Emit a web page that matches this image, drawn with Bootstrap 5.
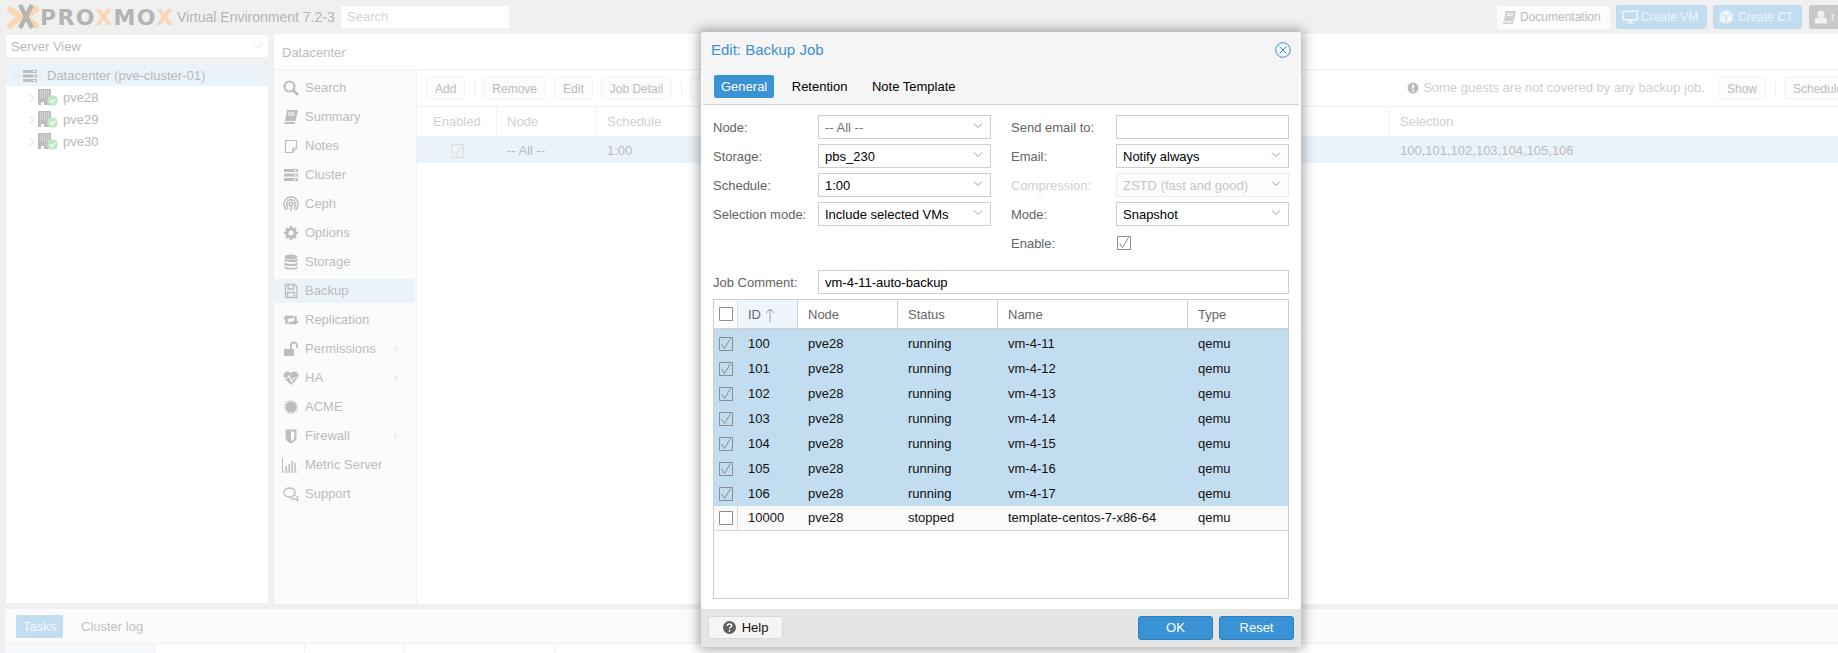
<!DOCTYPE html>
<html lang="en"><head><meta charset="utf-8"><title>Proxmox Virtual Environment</title>
<link href="https://cdn.jsdelivr.net/npm/bootstrap@5.3.0/dist/css/bootstrap.min.css" rel="stylesheet">
<style>
html,body{height:653px;overflow:hidden}
body{position:relative;background:#f0f0f0;font:13px/16px "Liberation Sans",Arial,sans-serif;color:#b7b7b7}
svg{display:block;flex:none}
.ico{fill:#bdbdbd}
.pm-top{height:34px;padding-left:7px}
.pm-brand{font:700 22px/25px "DejaVu Sans",sans-serif;letter-spacing:1.4px;color:#b4b4b4;width:138px;white-space:nowrap;padding-left:1px}
.pm-brand b{color:#fbd6b1;font-weight:700}
.pm-ver{font-size:14px;width:164px;white-space:nowrap;color:#b5b5b5}
.pm-search{width:168px;height:22px;background:#fff;color:#d5d5d5;padding:3px 6px;margin-top:-1px}
.pm-tbtn{height:23px;border-radius:3px;padding:0 5px;color:#bbb;background:#fcfcfc;font-size:12px;white-space:nowrap}
.pm-tbtn .ico{fill:#cfcfcf}
.pm-tbtn.blue{background:#c2dcf0;color:#eef6fb;border:1px solid #bdd9ee;height:24px;font-size:12px}
.pm-user{width:29px;height:24px;background:#c9c9c9;border-radius:3px 0 0 3px;color:#eee;padding-left:6px}
.pm-mid{height:570px;padding-left:6px;gap:6px}
.pm-left{width:262px;padding-top:1px}
.pm-view{height:22px;background:#fff;color:#bababa;padding:1px 5px 0}
.pm-tree{margin-top:7px;height:539px;background:#fff}
.pm-node{height:22px;color:#b9b9b9;padding:1px 0 0 6px}
.pm-node.on{background:#ebf3fa}
.pm-main{flex:1;background:#fff;min-width:0}
.pm-title{height:36px;border-bottom:1px solid #f0f0f0;padding:2px 8px 0;color:#bdbdbd}
.pm-side{width:143px;background:#fbfbfb;border-right:1px solid #f0f0f0;padding-top:3px}
.pm-item{height:29px;padding-left:9px;color:#bcbcbc;position:relative}
.pm-item.on::before{content:"";position:absolute;left:0;right:1px;top:3px;height:24px;background:#ebf3fa}
.pm-item>*{position:relative}
.pm-item svg{width:16px;height:16px;margin-right:6px}
.pm-caret{margin-left:auto;margin-right:17px;border-left:5px solid #efefef;border-top:5px solid transparent;border-bottom:5px solid transparent}
.pm-bar{height:37px;border-bottom:1px solid #f0f0f0;padding-left:9px}
.pm-btn{height:24px;background:#fcfcfc;border:1px solid #f3f3f3;border-radius:3px;padding:1px 8px 0;color:#bbb;font-size:12px;line-height:22px;white-space:nowrap}
.pm-sep{width:1px;height:15px;background:#eee;margin:0 8px 0 9px}
.pm-head{height:30px;color:#d0d0d0;border-bottom:1px solid #f0f0f0}
.pm-hc{border-right:1px solid #f2f2f2;padding-left:8px;padding-top:1px;height:100%;display:flex;align-items:center}
.pm-row{height:26px;background:#ebf3fa;color:#bcbcbc;padding-top:1px}
.pm-bottom{margin:5px 0 0 5px;background:#fbfbfb;height:44px}
.pm-tabs{height:35px;border-bottom:1px solid #f0f0f0;padding-left:11px}
.pm-tab{height:23px;padding:1px 7px 0;border-radius:2px;background:#c2dcf0;color:#f2f8fc;line-height:22px;width:47px}
.pm-clog{color:#c2c2c2;margin-left:18px;padding-top:1px;white-space:nowrap}
.pm-cols{height:9px;background:#fff}
.pm-cols div{border-right:1px solid #f0f0f0;height:100%}
/* modal */
.pm-dlg{position:absolute;left:701px;top:32px;width:600px;height:615px;background:#fff;border-radius:3px;box-shadow:0 0 12px 3px rgba(0,0,0,.32);overflow:hidden;color:#646464;display:flex;flex-direction:column}
.pm-dhead{height:43px;background:#f5f5f5;padding:0 10px 7px 10px;flex:none}
.pm-dtitle{font-size:15px;color:#3892d4}
.pm-dtabs{height:30px;background:#f5f5f5;margin:0 2px;padding-left:11px;border-bottom:1px solid #cfcfcf;flex:none;align-items:flex-start}
.pm-dtab{height:23px;line-height:23px;color:#000;padding:0 7px;border-radius:2px;background:transparent;border:0;font-size:13px}
.pm-dtab.active{background:#3892d4;color:#fff}
.pm-gap{margin-left:10.500px}
.pm-form{padding:10px 12px 0;flex:1;min-height:0}
.pm-cols2{display:grid;grid-template-columns:278px 278px;column-gap:20px;height:155px}
.pm-f{height:24px;margin-bottom:5px;display:flex;align-items:center}
.pm-f label{width:105px;flex:none;padding-top:1px}
.pm-f.dis{color:#d0d0d0}
.form-control.pm-in,.form-select.pm-in{width:173px;height:24px;min-height:24px;border:1px solid #cfcfcf;border-radius:0;padding:1px 5px 0 6px;font-size:13px;line-height:21px;color:#000;box-shadow:none;background-color:#fff}
.form-select.pm-in{background-image:url("data:image/svg+xml,%3Csvg xmlns='http://www.w3.org/2000/svg' width='10' height='6'%3E%3Cpath d='M1 .5l4 4 4-4' fill='none' stroke='%23999'/%3E%3C/svg%3E");background-position:right 7px top 7px;background-size:10px 6px}
.form-select.pm-in:disabled,.form-control.pm-in:disabled{color:#c6c6c6;border-color:#ececec;background-color:#fcfcfc}
.form-select.pm-in.dim{color:#747474}
.form-control.pm-long{width:471px}
.pm-chk{width:14px;height:14px;display:block}
.pm-grid{margin-top:5px;height:300px;width:576px;border:1px solid #cfcfcf;overflow:hidden}
.table.pm-tb{table-layout:fixed;width:575px;margin:0;color:#000;font-size:13px;border-collapse:separate;border-spacing:0}
.pm-tb th,.pm-tb td{padding:0 0 0 10px;border:0;vertical-align:middle;font-weight:400;background:transparent;box-shadow:none;white-space:nowrap;overflow:hidden}
.pm-tb th{height:29px;padding-top:1px;color:#666;border-right:1px solid #cfcfcf;border-bottom:1px solid #cfcfcf}
.pm-tb th.sorted{background:#eef5fc}
.pm-tb td{height:25px;color:#111}
.pm-tb th:first-child,.pm-tb td:first-child{padding:0 0 0 5px;border-right:1px solid #dcdcdc}
.pm-tb tr.sel td{background:#c2dcf0}
.pm-tb tr.sel td:first-child{border-right-color:#cfdde8}
.pm-tb tr.first td{height:27px;padding-top:2px}
.pm-tb tr.rest td{background:#fafafa;border-bottom:1px solid #d6d6d6;height:25px}
.pm-foot{height:38px;background:#e5e5e5;padding:0 7px;flex:none}
.pm-help{height:23px;width:75px;background:#f5f5f5;border:1px solid #d8d8d8;border-radius:3px;color:#111;font-size:13px;padding:0;line-height:21px;margin-top:-1px}
.pm-help svg{margin-right:6px}
.btn.pm-pri{height:24px;width:75px;background:#3892d4;border:1px solid #2a80c0;color:#fff;font-size:13px;border-radius:3px;padding:0;line-height:22px}
</style></head>
<body>
<svg width="0" height="0" class="position-absolute"><defs>
<symbol id="i-book" viewBox="0 0 16 16"><path d="M4 1h11l-2.500 11H2z M1.500 13h10.500l-.3 2H1z"/><path d="M5 4h7M4.600 6h7" stroke="#fbfbfb" fill="none"/></symbol>
<symbol id="i-srv" viewBox="0 0 16 16"><path d="M1 2h14v3H1zM1 6.500h14v3H1zM1 11h14v3H1z"/><path d="M11 3.500h2.500M11 8h2.500M11 12.500h2.500" stroke="#fff" fill="none"/></symbol>
<symbol id="i-node" viewBox="0 0 20 17"><path d="M0 0h13v16H0z" fill="#bdbdbd"/><path d="M2 2h9M2 4h9M2 6h9M2 8h9" stroke="#e8e8e8" stroke-dasharray="1 1"/><path d="M3 13h3v3H3z" fill="#fff"/><circle cx="14.500" cy="11.500" r="5.300" fill="#bfe8c5"/><path d="M12 11.500l2 2 3-3.500" fill="none" stroke="#fff" stroke-width="1.300"/></symbol>
<symbol id="i-on" viewBox="0 0 14 14"><path d="M.5.500h13v13H.5z" fill="none" stroke="#8c8c8c"/><path d="M2.500 7l3 4.500 6-10" fill="none" stroke="#8c8c8c"/></symbol>
<symbol id="i-off" viewBox="0 0 14 14"><path d="M.5.500h13v13H.5z" fill="#fff" stroke="#8c8c8c"/></symbol>
</defs></svg>

<div class="pm-top d-flex align-items-center">
  <svg width="32" height="26" viewBox="7 4 32 26"><path d="M8 8l13 9L8 27M38 8L25 17l13 10" fill="none" stroke="#fbd6b1" stroke-width="6"/><path d="M20 5l12 23M32 5L20 28" stroke="#b4b4b4" stroke-width="4.500" fill="none"/></svg>
  <div class="pm-brand">PRO<b>X</b>MO<b>X</b></div>
  <div class="pm-ver">Virtual Environment 7.2-3</div>
  <div class="pm-search">Search</div>
  <div class="ms-auto d-flex align-items-center">
    <div class="pm-tbtn d-flex align-items-center" style="width:113px"><svg class="ico" style="margin-right:3px" width="15" height="15"><use href="#i-book"/></svg>Documentation</div>
    <div class="pm-tbtn blue d-flex align-items-center" style="width:91px;margin-left:6px"><svg width="16" height="16" style="margin-right:3px" viewBox="0 0 16 16"><path d="M0 1.500h16v10H9.500v2H12v1H4v-1h2.500v-2H0z" fill="#eef6fb"/><path d="M1.500 3h13v7h-13z" fill="#c2dcf0"/></svg>Create VM</div>
    <div class="pm-tbtn blue d-flex align-items-center" style="width:89px;margin-left:6px"><svg width="14" height="14" style="margin-right:5px" viewBox="0 0 14 14"><path d="M7 0l6.500 3v8L7 14 .5 11V3z" fill="#eef6fb"/><path d="M7 6.500l5.500-3M7 6.500L1.500 3.500M7 6.500V14" stroke="#c2dcf0" fill="none"/></svg>Create CT</div>
    <div class="pm-user d-flex align-items-center" style="margin-left:7px"><svg width="12" height="14" viewBox="0 0 12 14"><circle cx="6" cy="4" r="3.500" fill="#f2f2f2"/><path d="M0 13.500V10q0-2.500 3-2.500h6q3 0 3 2.500v3.500z" fill="#f2f2f2"/></svg><span class="ms-1">r</span></div>
  </div>
</div>

<div class="pm-mid d-flex">
  <div class="pm-left flex-none">
    <div class="pm-view d-flex align-items-center justify-content-between">Server View<svg width="10" height="6"><path d="M1 .5l4 4 4-4" fill="none" stroke="#dedede"/></svg></div>
    <div class="pm-tree">
      <div class="pm-node on d-flex align-items-center"><svg width="10" height="6"><path d="M1 .5l4 4 4-4" fill="none" stroke="#d8d8d8"/></svg><svg class="ico" width="16" height="16"><use href="#i-srv"/></svg><span style="margin-left:9px">Datacenter (pve-cluster-01)</span></div>
      <div class="pm-node d-flex align-items-center ps-4"><svg width="6" height="10" style="margin:0 3px 0 -1px"><path d="M.5 1l4 4-4 4" fill="none" stroke="#d8d8d8"/></svg><svg width="20" height="17"><use href="#i-node"/></svg><span style="margin-left:5px">pve28</span></div>
      <div class="pm-node d-flex align-items-center ps-4"><svg width="6" height="10" style="margin:0 3px 0 -1px"><path d="M.5 1l4 4-4 4" fill="none" stroke="#d8d8d8"/></svg><svg width="20" height="17"><use href="#i-node"/></svg><span style="margin-left:5px">pve29</span></div>
      <div class="pm-node d-flex align-items-center ps-4"><svg width="6" height="10" style="margin:0 3px 0 -1px"><path d="M.5 1l4 4-4 4" fill="none" stroke="#d8d8d8"/></svg><svg width="20" height="17"><use href="#i-node"/></svg><span style="margin-left:5px">pve30</span></div>
    </div>
  </div>
  <div class="pm-main d-flex flex-column">
    <div class="pm-title d-flex align-items-center">Datacenter</div>
    <div class="d-flex flex-fill" style="min-height:0">
      <div class="pm-side">
        <div class="pm-item d-flex align-items-center"><svg class="ico" viewBox="0 0 16 16"><circle cx="6.500" cy="6.500" r="5" fill="none" stroke="#bdbdbd" stroke-width="2.200"/><path d="M10 10l5 5" stroke="#bdbdbd" stroke-width="2.600"/></svg><span>Search</span></div>
        <div class="pm-item d-flex align-items-center"><svg class="ico"><use href="#i-book"/></svg><span>Summary</span></div>
        <div class="pm-item d-flex align-items-center"><svg viewBox="0 0 16 16"><path d="M2.500 2.500h11v8l-4 4h-7z" fill="none" stroke="#bdbdbd" stroke-width="1.200"/><path d="M9.500 14v-4h4" fill="none" stroke="#bdbdbd"/></svg><span>Notes</span></div>
        <div class="pm-item d-flex align-items-center"><svg class="ico"><use href="#i-srv"/></svg><span>Cluster</span></div>
        <div class="pm-item d-flex align-items-center"><svg viewBox="0 0 16 16" fill="none" stroke="#bdbdbd" stroke-width="1.500"><path d="M3.500 14Q1 11.500 1 8a7 7 0 0 1 14 0q0 3.500-2.500 6"/><path d="M5.300 13Q3.800 11 3.800 8a4.200 4.200 0 0 1 8.400 0q0 3-1.500 5"/><circle cx="8" cy="8" r="1.800"/><path d="M8 10v5"/></svg><span>Ceph</span></div>
        <div class="pm-item d-flex align-items-center"><svg viewBox="0 0 16 16"><circle cx="8" cy="8" r="4" fill="none" stroke="#bdbdbd" stroke-width="3"/><path d="M8 1v14M1 8h14M3 3l10 10M13 3L3 13" stroke="#bdbdbd" stroke-width="2.400" stroke-dasharray="2.500 9 2.500 0"/></svg><span>Options</span></div>
        <div class="pm-item d-flex align-items-center"><svg viewBox="0 0 16 16" fill="#bdbdbd"><ellipse cx="8" cy="3" rx="6.500" ry="2.500"/><path d="M1.500 4.500v2.500c0 1.500 13 1.500 13 0V4.500q-6.500 3-13 0zM1.500 8.500V11c0 1.500 13 1.500 13 0V8.500q-6.500 3-13 0zM1.500 12.500V14c0 2 13 2 13 0v-1.500q-6.500 3-13 0z"/></svg><span>Storage</span></div>
        <div class="pm-item on d-flex align-items-center"><svg viewBox="0 0 16 16" fill="none" stroke="#bdbdbd" stroke-width="1.300"><path d="M2.500 1.500h9l2.500 2.500v10.500H2.500z"/><path d="M5 1.500v4.500h5.500V1.500M4.500 14.500V9.500h7v5"/></svg><span>Backup</span></div>
        <div class="pm-item d-flex align-items-center"><svg viewBox="0 0 16 16"><path d="M3.500 12V5h7" fill="none" stroke="#bdbdbd" stroke-width="2.500"/><path d="M0 7l3.500-4L7 7zM16 9l-3.500 4L9 9z" fill="#bdbdbd"/><path d="M12.500 4v7h-7" fill="none" stroke="#bdbdbd" stroke-width="2.500"/></svg><span>Replication</span></div>
        <div class="pm-item d-flex align-items-center"><svg viewBox="0 0 16 16"><path d="M1 8h10v7H1z" fill="#bdbdbd"/><path d="M8 8V4.500a3 3 0 0 1 6 0V7" fill="none" stroke="#bdbdbd" stroke-width="1.800"/></svg><span>Permissions</span><i class="pm-caret"></i></div>
        <div class="pm-item d-flex align-items-center"><svg viewBox="0 0 16 16"><path d="M8 15L1.500 8.500C-1 5 1.500 1.500 4.500 1.500 6 1.500 7.300 2.300 8 3.500 8.700 2.300 10 1.500 11.500 1.500c3 0 5.500 3.500 3 7z" fill="#bdbdbd"/><path d="M1 8h4l1.500-2.500L8.500 12l2-4H15" fill="none" stroke="#fbfbfb" stroke-width="1.100"/></svg><span>HA</span><i class="pm-caret"></i></div>
        <div class="pm-item d-flex align-items-center"><svg viewBox="0 0 16 16"><circle cx="8" cy="8" r="5.500" fill="#bdbdbd"/><circle cx="8" cy="8" r="6.200" fill="none" stroke="#bdbdbd" stroke-width="1.300" stroke-dasharray="1.600 1.300"/></svg><span>ACME</span></div>
        <div class="pm-item d-flex align-items-center"><svg viewBox="0 0 16 16"><path d="M2.500 1.500h11V9q0 4-5.500 6.500Q2.500 13 2.500 9z" fill="#bdbdbd"/><path d="M8 3.500h3.500V9q0 2.500-3.500 4.300z" fill="#fbfbfb"/></svg><span>Firewall</span><i class="pm-caret"></i></div>
        <div class="pm-item d-flex align-items-center" style="padding-left:8px"><svg viewBox="0 0 16 16" style="margin-right:7px"><path d="M.5 1v14h15" fill="none" stroke="#bdbdbd"/><path d="M3.500 9h1.500v5H3.500zM6.500 7H8v7H6.500zM9.300 4h1.500v10H9.300zM12.300 6h1.500v8h-1.500z" fill="#bdbdbd"/></svg><span>Metric Server</span></div>
        <div class="pm-item d-flex align-items-center"><svg viewBox="0 0 16 16" fill="none" stroke="#bdbdbd" stroke-width="1.300"><ellipse cx="6.500" cy="6.500" rx="5.500" ry="4.500"/><path d="M11.500 9q3 1 3.500 3l-.5 2.500-2-1.500q-3 .5-5-1"/></svg><span>Support</span></div>
      </div>
      <div class="flex-fill d-flex flex-column" style="min-width:0">
        <div class="pm-bar d-flex align-items-center">
          <div class="pm-btn">Add</div><i class="pm-sep"></i><div class="pm-btn">Remove</div><div class="pm-btn ms-2">Edit</div><div class="pm-btn ms-2">Job Detail</div><i class="pm-sep"></i><div class="pm-btn" style="width:64px"></div>
          <div class="ms-auto d-flex align-items-center"><svg width="12" height="12" viewBox="0 0 12 12" class="me-1"><circle cx="6" cy="6" r="5.500" fill="#bdbdbd"/><path d="M6 2.500v4.200M6 8v1.500" stroke="#fff" stroke-width="1.800"/></svg><span style="color:#cfcfcf">Some guests are not covered by any backup job.</span><div class="pm-btn" style="margin-left:13px">Show</div><i class="pm-sep"></i><div class="pm-btn" style="width:54px;overflow:hidden;border-right:0;border-radius:3px 0 0 3px">Schedule</div></div>
        </div>
        <div class="pm-head d-flex">
          <div class="pm-hc" style="width:80px;padding-left:16px">Enabled</div><div class="pm-hc" style="width:100px;padding-left:10px">Node</div><div class="pm-hc" style="width:793px;padding-left:10px">Schedule</div><div class="pm-hc border-0" style="padding-left:10px">Selection</div>
        </div>
        <div class="pm-row d-flex align-items-center">
          <div style="width:80px;padding-left:34px"><svg width="13" height="14" viewBox="0 0 13 14"><path d="M.5.500h12v13H.5z" fill="none" stroke="#dcdcdc"/><path d="M2 7l3 4 6-9" fill="none" stroke="#dcdcdc"/></svg></div><div style="width:100px;padding-left:10px">-- All --</div><div style="width:793px;padding-left:10px">1:00</div><div style="padding-left:10px">100,101,102,103,104,105,106</div>
        </div>
      </div>
    </div>
  </div>
</div>

<div class="pm-bottom">
  <div class="pm-tabs d-flex align-items-center"><div class="pm-tab">Tasks</div><div class="pm-clog">Cluster log</div></div>
  <div class="pm-cols d-flex"><div style="width:150px;background:#f6f9fd"></div><div style="width:150px"></div><div style="width:100px"></div><div style="width:150px"></div></div>
</div>

<div class="pm-dlg" role="dialog">
  <div class="pm-dhead d-flex align-items-center justify-content-between">
    <div class="pm-dtitle">Edit: Backup Job</div>
    <svg width="16" height="16" viewBox="0 0 16 16" fill="none" stroke="#3892d4"><circle cx="8" cy="8" r="7.300"/><path d="M4.500 4.500l7 7M11.500 4.500l-7 7"/></svg>
  </div>
  <ul class="nav pm-dtabs d-flex">
    <li class="nav-item"><button class="nav-link pm-dtab active">General</button></li>
    <li class="nav-item pm-gap"><button class="nav-link pm-dtab">Retention</button></li>
    <li class="nav-item pm-gap"><button class="nav-link pm-dtab">Note Template</button></li>
  </ul>
  <div class="pm-form">
    <div class="pm-cols2">
      <div>
        <div class="pm-f"><label>Node:</label><select class="form-select pm-in dim"><option>-- All --</option></select></div>
        <div class="pm-f"><label>Storage:</label><select class="form-select pm-in"><option>pbs_230</option></select></div>
        <div class="pm-f"><label>Schedule:</label><select class="form-select pm-in"><option>1:00</option></select></div>
        <div class="pm-f"><label>Selection mode:</label><select class="form-select pm-in"><option>Include selected VMs</option></select></div>
      </div>
      <div>
        <div class="pm-f"><label>Send email to:</label><input class="form-control pm-in" type="text" value=""></div>
        <div class="pm-f"><label>Email:</label><select class="form-select pm-in"><option>Notify always</option></select></div>
        <div class="pm-f dis"><label>Compression:</label><select class="form-select pm-in" disabled><option>ZSTD (fast and good)</option></select></div>
        <div class="pm-f"><label>Mode:</label><select class="form-select pm-in"><option>Snapshot</option></select></div>
        <div class="pm-f"><label>Enable:</label><svg class="pm-chk" style="margin-left:1px"><use href="#i-on"/></svg></div>
      </div>
    </div>
    <div class="pm-f m-0"><label>Job Comment:</label><input class="form-control pm-in pm-long" type="text" value="vm-4-11-auto-backup"></div>
    <div class="pm-grid">
      <table class="table pm-tb">
        <colgroup><col style="width:24px"><col style="width:60px"><col style="width:100px"><col style="width:100px"><col style="width:190px"><col></colgroup>
        <thead><tr><th><svg class="pm-chk"><use href="#i-off"/></svg></th><th class="sorted"><span class="d-flex align-items-center">ID<svg class="ms-1" width="10" height="14" viewBox="0 0 10 14"><path d="M5 14V1M1 5l4-4 4 4" fill="none" stroke="#a0a0a0"/></svg></span></th><th>Node</th><th>Status</th><th>Name</th><th>Type</th></tr></thead>
        <tbody>
          <tr class="sel first"><td><svg class="pm-chk"><use href="#i-on"/></svg></td><td>100</td><td>pve28</td><td>running</td><td>vm-4-11</td><td>qemu</td></tr>
          <tr class="sel"><td><svg class="pm-chk"><use href="#i-on"/></svg></td><td>101</td><td>pve28</td><td>running</td><td>vm-4-12</td><td>qemu</td></tr>
          <tr class="sel"><td><svg class="pm-chk"><use href="#i-on"/></svg></td><td>102</td><td>pve28</td><td>running</td><td>vm-4-13</td><td>qemu</td></tr>
          <tr class="sel"><td><svg class="pm-chk"><use href="#i-on"/></svg></td><td>103</td><td>pve28</td><td>running</td><td>vm-4-14</td><td>qemu</td></tr>
          <tr class="sel"><td><svg class="pm-chk"><use href="#i-on"/></svg></td><td>104</td><td>pve28</td><td>running</td><td>vm-4-15</td><td>qemu</td></tr>
          <tr class="sel"><td><svg class="pm-chk"><use href="#i-on"/></svg></td><td>105</td><td>pve28</td><td>running</td><td>vm-4-16</td><td>qemu</td></tr>
          <tr class="sel"><td><svg class="pm-chk"><use href="#i-on"/></svg></td><td>106</td><td>pve28</td><td>running</td><td>vm-4-17</td><td>qemu</td></tr>
          <tr class="rest"><td><svg class="pm-chk"><use href="#i-off"/></svg></td><td>10000</td><td>pve28</td><td>stopped</td><td>template-centos-7-x86-64</td><td>qemu</td></tr>
        </tbody>
      </table>
    </div>
  </div>
  <div class="pm-foot d-flex align-items-center">
    <button class="btn pm-help d-flex align-items-center justify-content-center"><svg width="13" height="13" viewBox="0 0 13 13"><circle cx="6.500" cy="6.500" r="6.500" fill="#5f5f5f"/><path d="M4.300 5q0-2 2.200-2t2.200 1.800c0 1.400-2.200 1.500-2.200 3" fill="none" stroke="#fff" stroke-width="1.400"/><path d="M6.500 9v1.700" stroke="#fff" stroke-width="1.500"/></svg>Help</button>
    <button class="btn pm-pri ms-auto">OK</button>
    <button class="btn pm-pri" style="margin-left:6px">Reset</button>
  </div>
</div>
<script src="https://cdn.jsdelivr.net/npm/bootstrap@5.3.0/dist/js/bootstrap.bundle.min.js"></script>
</body></html>
